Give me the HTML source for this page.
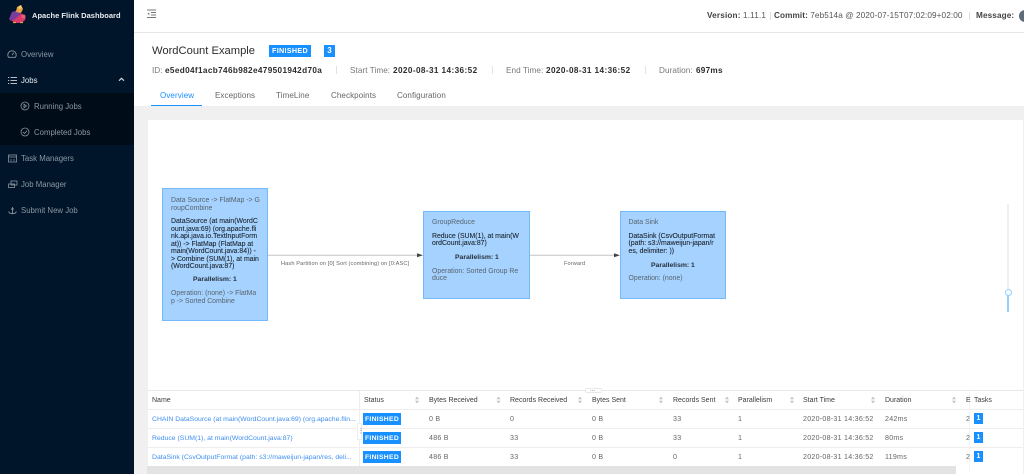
<!DOCTYPE html>
<html><head><meta charset="utf-8"><title>Apache Flink Dashboard</title>
<style>
html,body{margin:0;padding:0;width:1024px;height:474px;overflow:hidden;background:#f0f0f0;font-family:"Liberation Sans",sans-serif;}
body{filter:blur(.3px);}
.t{position:absolute;white-space:nowrap;line-height:10px;}
.b{position:absolute;}
.m{font-size:7.8px;color:#8a97a3;}
.n{font-size:6.9px;color:#59646f;}
.nm{font-size:6.9px;color:#1f2933;-webkit-text-stroke:.12px #1f2933;}
.nb{font-size:6.8px;color:#26303a;font-weight:bold;}
.th{font-size:7px;color:#3c3c3c;top:396px;}
.td{font-size:7.1px;color:#666;letter-spacing:.25px;}
.lk{font-size:6.85px;color:#3f8ef0;}
.fin{position:absolute;left:363px;width:38px;height:12px;background:#1890ff;color:#fff;font-size:6.8px;font-weight:bold;line-height:13px;text-align:center;letter-spacing:.3px;}
.one{position:absolute;left:974px;width:9px;height:11px;background:#1890ff;color:#fff;font-size:7px;font-weight:bold;line-height:12px;text-align:center;}
.node{position:absolute;background:#a5d2ff;border:1px solid #74b9fb;box-sizing:border-box;}
.sv{font-size:8.2px;font-weight:bold;color:#2c2c2c;letter-spacing:.25px;}
.lb{font-size:8.2px;color:#777;}
.tab{font-size:8px;color:#666;top:91px;letter-spacing:.1px;}
</style></head><body>

<div class="b" style="left:0;top:0;width:134px;height:474px;background:#001529"></div>
<div class="b" style="left:0;top:93px;width:134px;height:52px;background:#000c17"></div>

<svg class="b" style="left:7px;top:4px" width="20" height="20" viewBox="0 0 20 20">
<ellipse cx="11" cy="14" rx="7.5" ry="5" fill="#d83a6c"/>
<path d="M2 15 L5 8 L11 6 L14 10 L8 15 L4 17 Z" fill="#7a3c9a"/>
<path d="M9 8 L10 3 L14 1 L16 5 L14 9 Z" fill="#e9a441"/>
<path d="M11 3 L14 1 L15 4 L12 5Z" fill="#f4cf7a"/>
<circle cx="16.5" cy="12.5" r="2" fill="#e85d75"/>
<path d="M6 18.5h3M13 18.5h3" stroke="#e8a03a" stroke-width="1.2"/>
</svg>
<div class="t" style="left:32px;top:11px;font-size:7.5px;font-weight:bold;color:#e8edf2;letter-spacing:.03px">Apache Flink Dashboard</div>

<svg class="b" style="left:7px;top:49px" width="10" height="10" viewBox="0 0 10 10" fill="none" stroke="#8a97a3" stroke-width=".9"><path d="M1.5 8.3A4.2 4.2 0 1 1 8.5 8.3Z"/><path d="M5 6L6.8 3.8"/></svg>
<div class="t m" style="left:21px;top:50px">Overview</div>

<svg class="b" style="left:8px;top:76px" width="9" height="9" viewBox="0 0 9 9" stroke="#b5bec7" stroke-width=".9"><path d="M0 1.5H1.2M2.5 1.5H9M0 4.5H1.2M2.5 4.5H9M0 7.5H1.2M2.5 7.5H9"/></svg>
<div class="t m" style="left:21px;top:76px;color:#e6ebf0">Jobs</div>
<svg class="b" style="left:118px;top:77px" width="7" height="5" viewBox="0 0 7 5" fill="none" stroke="#d5dbe1" stroke-width="1.1"><path d="M1 3.7L3.5 1.3L6 3.7"/></svg>

<svg class="b" style="left:20px;top:101px" width="10" height="10" viewBox="0 0 10 10" fill="none" stroke="#8a97a3" stroke-width=".8"><circle cx="5" cy="5" r="4"/><path d="M4 3.2L6.5 5L4 6.8Z"/></svg>
<div class="t m" style="left:34px;top:102px">Running Jobs</div>
<svg class="b" style="left:20px;top:127px" width="10" height="10" viewBox="0 0 10 10" fill="none" stroke="#8a97a3" stroke-width=".8"><circle cx="5" cy="5" r="4"/><path d="M3 5L4.5 6.5L7 3.7"/></svg>
<div class="t m" style="left:34px;top:128px">Completed Jobs</div>

<svg class="b" style="left:8px;top:154px" width="9" height="9" viewBox="0 0 9 9" fill="none" stroke="#8a97a3" stroke-width=".8"><rect x=".5" y="1" width="8" height="7"/><path d="M.5 3H8.5M2 6H4M5 6H7"/></svg>
<div class="t m" style="left:21px;top:154px">Task Managers</div>
<svg class="b" style="left:8px;top:180px" width="10" height="9" viewBox="0 0 10 9" fill="none" stroke="#8a97a3" stroke-width=".8"><rect x="3" y="1" width="6" height="4"/><rect x=".5" y="4" width="6" height="3.5"/></svg>
<div class="t m" style="left:21px;top:180px">Job Manager</div>
<svg class="b" style="left:8px;top:206px" width="9" height="9" viewBox="0 0 9 9" fill="none" stroke="#8a97a3" stroke-width=".9"><path d="M4.5 1V7.5M3 3H6M.7 5.5C1 7 2 7.7 4.5 7.7S8 7 8.3 5.5"/></svg>
<div class="t m" style="left:21px;top:206px">Submit New Job</div>

<div class="b" style="left:134px;top:0;width:890px;height:106px;background:#fff"></div>
<div class="b" style="left:134px;top:32px;width:890px;height:1px;background:#e6e6e6"></div>
<svg class="b" style="left:147px;top:9px" width="10" height="10" viewBox="0 0 10 10" stroke="#777" stroke-width="1" fill="none"><path d="M0 1H9M4 3.5H9M4 6H9M0 8.5H9"/><path d="M2.3 3.4L.5 4.8L2.3 6.2Z" fill="#777" stroke="none"/></svg>

<div class="t" style="left:707px;top:11px;font-size:8.2px;color:#555;letter-spacing:.16px"><b style="color:#444">Version:</b> 1.11.1</div>
<div class="b" style="left:770px;top:12px;width:1px;height:8px;background:#ddd"></div>
<div class="t" style="left:774px;top:11px;font-size:8.2px;color:#555;letter-spacing:.1px"><b style="color:#444">Commit:</b> 7eb514a @ 2020-07-15T07:02:09+02:00</div>
<div class="b" style="left:969px;top:12px;width:1px;height:8px;background:#ddd"></div>
<div class="t" style="left:976px;top:11px;font-size:8.2px;font-weight:bold;color:#444;letter-spacing:.12px">Message:</div>
<div class="b" style="left:1019px;top:10px;width:12px;height:12px;border-radius:50%;background:#5f6b76"></div>

<div class="t" style="left:152px;top:45px;font-size:11.2px;color:#2d2d2d;line-height:12px">WordCount Example</div>
<div class="b" style="left:269px;top:45px;width:42px;height:12px;background:#1890ff;color:#fff;font-size:7.2px;font-weight:bold;line-height:12px;text-align:center;letter-spacing:.3px">FINISHED</div>
<div class="b" style="left:324px;top:45px;width:11px;height:12px;background:#1890ff;color:#fff;font-size:8px;font-weight:bold;line-height:12px;text-align:center">3</div>

<div class="t lb" style="left:152px;top:66px">ID:</div>
<div class="t sv" style="left:165px;top:66px;letter-spacing:.36px">e5ed04f1acb746b982e479501942d70a</div>
<div class="b" style="left:336px;top:66px;width:1px;height:8px;background:#e2e2e2"></div>
<div class="t lb" style="left:350px;top:66px;letter-spacing:.05px">Start Time:</div>
<div class="t sv" style="left:393px;top:66px;letter-spacing:.4px">2020-08-31 14:36:52</div>
<div class="b" style="left:492px;top:66px;width:1px;height:8px;background:#e2e2e2"></div>
<div class="t lb" style="left:506px;top:66px;letter-spacing:.05px">End Time:</div>
<div class="t sv" style="left:546px;top:66px;letter-spacing:.4px">2020-08-31 14:36:52</div>
<div class="b" style="left:645px;top:66px;width:1px;height:8px;background:#e2e2e2"></div>
<div class="t lb" style="left:659px;top:66px;letter-spacing:.05px">Duration:</div>
<div class="t sv" style="left:696px;top:66px">697ms</div>

<div class="t tab" style="left:160px;color:#1890ff">Overview</div>
<div class="t tab" style="left:215px">Exceptions</div>
<div class="t tab" style="left:276px">TimeLine</div>
<div class="t tab" style="left:331px">Checkpoints</div>
<div class="t tab" style="left:397px">Configuration</div>
<div class="b" style="left:151px;top:105px;width:51px;height:1px;background:#1890ff"></div>

<div class="b" style="left:148px;top:120px;width:875px;height:354px;background:#fff"></div>

<svg class="b" style="left:268px;top:250px" width="360" height="12" viewBox="0 0 360 12">
<path d="M0 5.2H151M262 5.2H348" stroke="#c4c4c4" stroke-width="1" fill="none"/>
<path d="M149 3.2L155 5.2L149 7.2Z M346 3.2L352 5.2L346 7.2Z" fill="#444"/>
</svg>
<div class="t" style="left:281px;top:259px;font-size:5.6px;color:#666;letter-spacing:.13px">Hash Partition on [0] Sort (combining) on [0:ASC]</div>
<div class="t" style="left:564px;top:259px;font-size:5.6px;color:#666;letter-spacing:.1px">Forward</div>

<div class="node" style="left:162px;top:188px;width:106px;height:133px"></div>
<div class="t n" style="left:171px;top:196px">Data Source -&gt; FlatMap -&gt; G</div>
<div class="t n" style="left:171px;top:203.5px">roupCombine</div>
<div class="t nm" style="left:171px;top:217px">DataSource (at main(WordC</div>
<div class="t nm" style="left:171px;top:224.5px">ount.java:69) (org.apache.fli</div>
<div class="t nm" style="left:171px;top:232px">nk.api.java.io.TextInputForm</div>
<div class="t nm" style="left:171px;top:239.5px">at)) -&gt; FlatMap (FlatMap at</div>
<div class="t nm" style="left:171px;top:247px">main(WordCount.java:84)) -</div>
<div class="t nm" style="left:171px;top:254.5px">&gt; Combine (SUM(1), at main</div>
<div class="t nm" style="left:171px;top:262px">(WordCount.java:87)</div>
<div class="t nb" style="left:193px;top:275px">Parallelism: 1</div>
<div class="t n" style="left:171px;top:289px">Operation: (none) -&gt; FlatMa</div>
<div class="t n" style="left:171px;top:297px">p -&gt; Sorted Combine</div>

<div class="node" style="left:423px;top:211px;width:107px;height:88px"></div>
<div class="t n" style="left:432px;top:217.7px">GroupReduce</div>
<div class="t nm" style="left:432px;top:231.7px">Reduce (SUM(1), at main(W</div>
<div class="t nm" style="left:432px;top:239px">ordCount.java:87)</div>
<div class="t nb" style="left:455px;top:253px">Parallelism: 1</div>
<div class="t n" style="left:432px;top:266.7px">Operation: Sorted Group Re</div>
<div class="t n" style="left:432px;top:274px">duce</div>

<div class="node" style="left:620px;top:211px;width:106px;height:88px"></div>
<div class="t n" style="left:628.5px;top:217.7px">Data Sink</div>
<div class="t nm" style="left:628.5px;top:231.7px">DataSink (CsvOutputFormat</div>
<div class="t nm" style="left:628.5px;top:239px">(path: s3://maweijun-japan/r</div>
<div class="t nm" style="left:628.5px;top:246.7px">es, delimiter: ))</div>
<div class="t nb" style="left:651px;top:260.7px">Parallelism: 1</div>
<div class="t n" style="left:628.5px;top:274px">Operation: (none)</div>

<div class="b" style="left:1007px;top:204px;width:2px;height:85px;background:#efefef"></div>
<div class="b" style="left:1007px;top:295px;width:2px;height:17px;background:#91d0ff"></div>
<div class="b" style="left:1004.5px;top:289px;width:7px;height:7px;border-radius:50%;background:#fff;border:1px solid #91d0ff;box-sizing:border-box"></div>

<div class="b" style="left:148px;top:390px;width:875px;height:1px;background:#e8e8e8"></div>
<div class="b" style="left:148px;top:409px;width:875px;height:1px;background:#eee"></div>
<div class="b" style="left:148px;top:428px;width:875px;height:1px;background:#eee"></div>
<div class="b" style="left:148px;top:447px;width:875px;height:1px;background:#eee"></div>
<div class="b" style="left:359px;top:391px;width:1px;height:75px;background:#eee"></div>
<div class="b" style="left:969px;top:391px;width:1px;height:80px;background:#f3f3f3"></div>
<div class="b" style="left:147px;top:466px;width:809px;height:8px;background:#e3e3e3"></div>
<div class="b" style="left:585px;top:388px;width:17px;height:5px;background:#fff;border:1px solid #e8e8e8;border-radius:2px;box-sizing:border-box"></div>
<div class="t" style="left:590px;top:385px;font-size:6px;color:#666">...</div>
<div class="b" style="left:357px;top:423px;width:5px;height:17px;background:#fff;border:1px solid #eee;box-sizing:border-box"></div>
<div class="t" style="left:357.5px;top:430px;font-size:7px;line-height:3px;color:#666">⋮</div>

<div class="t th" style="left:152px">Name</div>
<div class="t th" style="left:364px">Status</div>
<div class="t th" style="left:429px">Bytes Received</div>
<div class="t th" style="left:510px">Records Received</div>
<div class="t th" style="left:592px">Bytes Sent</div>
<div class="t th" style="left:673px">Records Sent</div>
<div class="t th" style="left:738px">Parallelism</div>
<div class="t th" style="left:803px">Start Time</div>
<div class="t th" style="left:885px">Duration</div>
<div class="t th" style="left:966px">E</div>
<div class="t th" style="left:974px;background:#fff;padding-right:4px">Tasks</div>
<svg class="b" style="left:0;top:0;pointer-events:none" width="1024" height="474" fill="#c4c4c4">
<path d="M417 396.5l2 2.7h-4zM417 403.5l2-2.7h-4zM498.5 396.5l2 2.7h-4zM498.5 403.5l2-2.7h-4zM580 396.5l2 2.7h-4zM580 403.5l2-2.7h-4zM661 396.5l2 2.7h-4zM661 403.5l2-2.7h-4zM727 396.5l2 2.7h-4zM727 403.5l2-2.7h-4zM792 396.5l2 2.7h-4zM792 403.5l2-2.7h-4zM873 396.5l2 2.7h-4zM873 403.5l2-2.7h-4zM954 396.5l2 2.7h-4zM954 403.5l2-2.7h-4z"/>
</svg>

<div class="t lk" style="left:152px;top:415px">CHAIN DataSource (at main(WordCount.java:69) (org.apache.flin...</div>
<div class="fin" style="top:413px">FINISHED</div>
<div class="t td" style="left:429px;top:414px">0 B</div>
<div class="t td" style="left:510px;top:414px">0</div>
<div class="t td" style="left:592px;top:414px">0 B</div>
<div class="t td" style="left:673px;top:414px">33</div>
<div class="t td" style="left:738px;top:414px">1</div>
<div class="t td" style="left:803px;top:414px">2020-08-31 14:36:52</div>
<div class="t td" style="left:885px;top:414px">242ms</div>
<div class="t td" style="left:966px;top:414px">2</div>
<div class="one" style="top:413px">1</div>

<div class="t lk" style="left:152px;top:434px">Reduce (SUM(1), at main(WordCount.java:87)</div>
<div class="fin" style="top:432px">FINISHED</div>
<div class="t td" style="left:429px;top:433px">486 B</div>
<div class="t td" style="left:510px;top:433px">33</div>
<div class="t td" style="left:592px;top:433px">0 B</div>
<div class="t td" style="left:673px;top:433px">33</div>
<div class="t td" style="left:738px;top:433px">1</div>
<div class="t td" style="left:803px;top:433px">2020-08-31 14:36:52</div>
<div class="t td" style="left:885px;top:433px">80ms</div>
<div class="t td" style="left:966px;top:433px">2</div>
<div class="one" style="top:432px">1</div>

<div class="t lk" style="left:152px;top:453px">DataSink (CsvOutputFormat (path: s3://maweijun-japan/res, deli...</div>
<div class="fin" style="top:451px">FINISHED</div>
<div class="t td" style="left:429px;top:452px">486 B</div>
<div class="t td" style="left:510px;top:452px">33</div>
<div class="t td" style="left:592px;top:452px">0 B</div>
<div class="t td" style="left:673px;top:452px">0</div>
<div class="t td" style="left:738px;top:452px">1</div>
<div class="t td" style="left:803px;top:452px">2020-08-31 14:36:52</div>
<div class="t td" style="left:885px;top:452px">119ms</div>
<div class="t td" style="left:966px;top:452px">2</div>
<div class="one" style="top:451px">1</div>

</body></html>
